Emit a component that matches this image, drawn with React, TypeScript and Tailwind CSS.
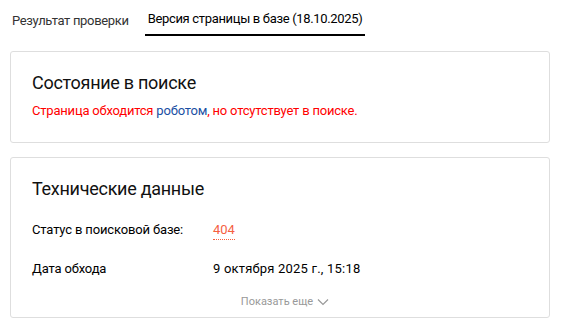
import React from "react";

export default function App() {
  const font = { fontFamily: 'Roboto, "Noto Sans", Arial, sans-serif' };
  return (
    <div className="w-[572px] h-[325px] bg-white overflow-hidden text-black" style={font}>
      <div className="flex items-end pl-[12px] h-[36px] tracking-[-0.33px]">
        <div className="text-[13px] leading-[18px] text-[#333] pb-[6px] mr-[16px]">Результат проверки</div>
        <div className="text-[13px] leading-[18px] text-black px-[3px] pb-[6px] border-b-2 border-black">
          Версия страницы в базе (18.10.2025)
        </div>
      </div>
      <div className="px-[10px] pt-[15px] flex flex-col gap-[14px] w-[560px]">
        <div className="border border-[#dedede] rounded-[3px] px-[21px] pt-[19px] pb-[22px]">
          <div className="text-[18px] leading-[24px] text-[#111] tracking-[-0.28px]">Состояние в поиске</div>
          <div className="mt-[7px] text-[13px] leading-[18px] text-[#ff0000] tracking-[-0.2px]">
            Страница обходится <span className="text-[#1a4fa3]">роботом</span>, но отсутствует в поиске.
          </div>
        </div>
        <div className="border border-[#dedede] rounded-[3px] px-[21px] pt-[19px] pb-[7px]">
          <div className="text-[18px] leading-[24px] text-[#111] tracking-[-0.28px]">Технические данные</div>
          <div className="mt-[20px] flex text-[13px] leading-[18px]">
            <div className="w-[181px] tracking-[-0.15px]">Статус в поисковой базе:</div>
            <div className="text-[#f5603f] border-b border-dotted border-[#f5603f] leading-[17px] h-[19px]">404</div>
          </div>
          <div className="mt-[20px] flex text-[13px] leading-[18px]">
            <div className="w-[181px] tracking-[-0.15px]">Дата обхода</div>
            <div className="tracking-[0.2px]">9 октября 2025 г., 15:18</div>
          </div>
          <div className="mt-[16px] flex justify-center items-center gap-[4px] text-[11px] leading-[16px] text-[#999] pl-[10px]">
            <span>Показать еще</span>
            <svg width="12" height="8" viewBox="0 0 12 8" fill="none">
              <path d="M1 1.5 L6 6.5 L11 1.5" stroke="#999" strokeWidth="1.2" />
            </svg>
          </div>
        </div>
      </div>
    </div>
  );
}
